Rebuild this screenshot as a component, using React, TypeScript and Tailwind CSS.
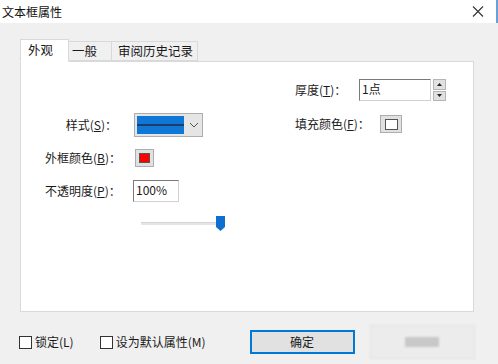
import { useState } from 'react'

const font = 'font-["Microsoft_YaHei","Noto_Sans_CJK_SC",sans-serif]'

const tabs = [
  { label: '外观', w: 'w-[49px] pl-[7px]' },
  { label: '一般', w: 'w-[44px] pl-[3px]' },
  { label: '审阅历史记录', w: 'w-[87px] pl-[6px]' },
]

function Checkbox({ label }: { label: string }) {
  const [checked, setChecked] = useState(false)
  return (
    <label className="flex items-center gap-[3px] cursor-default" onClick={() => setChecked(!checked)}>
      <span className="w-[13px] h-[13px] border border-[#333] bg-white flex items-center justify-center text-[10px] leading-none">
        {checked ? '✓' : ''}
      </span>
      <span>{label}</span>
    </label>
  )
}

export default function App() {
  const [tab, setTab] = useState(0)

  return (
    <div className={`w-[498px] h-[364px] bg-[#f0f0f0] text-[12px] text-[#1a1a1a] ${font} flex flex-col overflow-hidden`}>
      {/* Title bar */}
      <div className="h-[23px] bg-white flex items-center justify-between pl-[2px] border-r-2 border-[#6aa0d8]">
        <span className="text-[12px] text-[#111]">文本框属性</span>
        <svg width="12" height="11" viewBox="0 0 12 11" className="mr-[12px]">
          <path d="M1 0.5 L11 10.5 M11 0.5 L1 10.5" stroke="#333" strokeWidth="1.1" />
        </svg>
      </div>

      <div className="flex-1 flex flex-col px-[20px] pt-[16px]">
        {/* Tabs */}
        <div className="flex items-end h-[22px] text-[12.5px]">
          {tabs.map((t, i) =>
            tab === i ? (
              <button
                key={t.label}
                onClick={() => setTab(i)}
                className={`relative z-10 -mb-px h-[23px] ${t.w} bg-white border border-[#d9d9d9] border-b-white text-left`}
              >
                {t.label}
              </button>
            ) : (
              <button
                key={t.label}
                onClick={() => setTab(i)}
                className={`h-[20px] ${t.w} bg-[#f0f0f0] border border-[#d9d9d9] -ml-px text-left leading-[18px]`}
              >
                {t.label}
              </button>
            ),
          )}
        </div>

        {/* Panel */}
        <div className="w-[454px] h-[251px] bg-white border border-[#d9d9d9] flex">
          {/* Left column */}
          <div className="w-[274px] pt-[51px] flex flex-col">
            <div className="flex items-center h-[24px]">
              <span className="w-[98px] text-right pr-[2px]">
                样式(<span className="underline">S</span>)：
              </span>
              <div className="ml-[15px] w-[69px] h-[24px] border border-[#adadad] bg-[#e5e5e5] flex items-center pl-[2px]">
                <div className="w-[47px] h-[18px] bg-[#0f78d7] flex items-center">
                  <div className="w-full h-[2px] bg-[#1d3e6a]" />
                </div>
                <svg width="10" height="6" viewBox="0 0 10 6" className="ml-[5px]">
                  <path d="M1 1 L5 5 L9 1" fill="none" stroke="#555" strokeWidth="1" />
                </svg>
              </div>
            </div>

            <div className="flex items-center h-[18px] mt-[12px]">
              <span className="w-[100px] pl-[24px]">
                外框颜色(<span className="underline">B</span>)：
              </span>
              <div className="ml-[14px] w-[19px] h-[18px] border border-[#adadad] bg-[#e1e1e1] flex items-center justify-center">
                <div className="w-[11px] h-[10px] bg-[#ff0000] border border-[#555]" />
              </div>
            </div>

            <div className="flex items-center h-[22px] mt-[13px]">
              <span className="w-[100px] pl-[24px]">
                不透明度(<span className="underline">P</span>)：
              </span>
              <div className="ml-[12px] w-[46px] h-[22px] border border-[#7a7a7a] border-r-[#d0d0d0] border-b-[#d0d0d0] bg-white pl-[2px] leading-[18px]">
                100%
              </div>
            </div>

            <div className="relative ml-[120px] mt-[14px] w-[86px] h-[15px] flex items-center">
              <div className="w-[80px] h-[3px] bg-[#e6e6e6] border-t border-[#d4d4d4]" />
              <svg width="9" height="15" viewBox="0 0 9 15" className="absolute left-[75px] top-0">
                <path d="M0 0 H9 V11 L4.5 15 L0 11 Z" fill="#0f6fd0" />
              </svg>
            </div>
          </div>

          {/* Right column */}
          <div className="flex-1 pt-[17px] flex flex-col">
            <div className="flex items-center h-[22px]">
              <span className="w-[64px]">
                厚度(<span className="underline">T</span>)：
              </span>
              <div className="w-[72px] h-[22px] border border-[#7a7a7a] border-r-[#d0d0d0] border-b-[#d0d0d0] bg-white pl-[2px] leading-[18px]">
                1点
              </div>
              <div className="ml-[2px] w-[13px] h-[22px] flex flex-col gap-px">
                <div className="flex-1 bg-[#e1e1e1] border border-[#b5b5b5] flex items-center justify-center">
                  <svg width="5" height="3" viewBox="0 0 5 3">
                    <path d="M0 3 L2.5 0 L5 3 Z" fill="#222" />
                  </svg>
                </div>
                <div className="flex-1 bg-[#e1e1e1] border border-[#b5b5b5] flex items-center justify-center">
                  <svg width="5" height="3" viewBox="0 0 5 3">
                    <path d="M0 0 L2.5 3 L5 0 Z" fill="#222" />
                  </svg>
                </div>
              </div>
            </div>

            <div className="flex items-center h-[18px] mt-[14px]">
              <span className="w-[85px]">
                填充颜色(<span className="underline">F</span>)：
              </span>
              <div className="w-[22px] h-[18px] border border-[#adadad] bg-[#e1e1e1] flex items-center justify-center">
                <div className="w-[13px] h-[11px] bg-white border border-[#555]" />
              </div>
            </div>
          </div>
        </div>

        {/* Footer */}
        <div className="flex items-center mt-[13px] h-[34px]">
          <div className="flex items-center gap-[26px] -ml-px">
            <Checkbox label="锁定(L)" />
            <Checkbox label="设为默认属性(M)" />
          </div>
          <button className="ml-[44px] w-[105px] h-[24px] bg-[#e1e1e1] border-2 border-[#0078d7] text-center">
            确定
          </button>
          <button className="ml-[15px] w-[105px] h-[34px] bg-[#ececec] border border-[#e2e2e2] blur-[1px] flex items-center justify-center">
            <span className="w-[34px] h-[10px] bg-[#c8c8c8]" />
          </button>
        </div>
      </div>
    </div>
  )
}
